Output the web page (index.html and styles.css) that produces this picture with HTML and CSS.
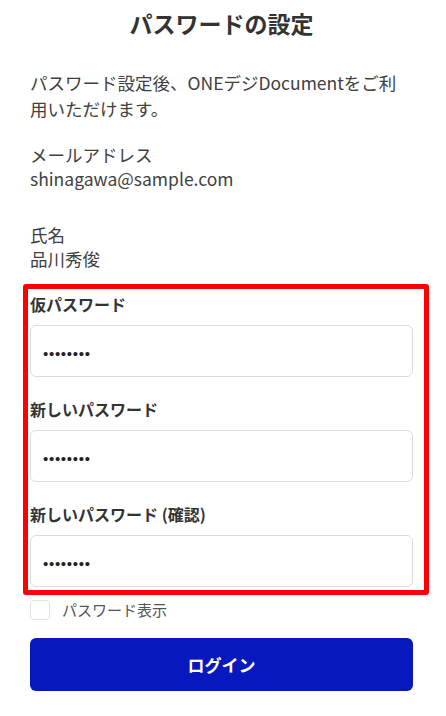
FILE: index.html
```html
<!DOCTYPE html>
<html lang="ja">
<head>
    <meta charset="UTF-8">
    <title>パスワードの設定</title>
    <link rel="stylesheet" href="styles.css">
</head>
<body>
    <div class="page">
        <h1 class="title">パスワードの設定</h1>

        <p class="lead">パスワード設定後、ONEデジDocumentをご利<br>用いただけます。</p>

        <dl class="info">
            <dt>メールアドレス</dt>
            <dd>shinagawa@sample.com</dd>
        </dl>
        <dl class="info">
            <dt>氏名</dt>
            <dd>品川秀俊</dd>
        </dl>

        <div class="mark">
            <div class="field">
                <label class="field-label" for="tmp">仮パスワード</label>
                <input class="field-input" id="tmp" type="password" value="12345678">
            </div>
            <div class="field">
                <label class="field-label" for="pw">新しいパスワード</label>
                <input class="field-input" id="pw" type="password" value="12345678">
            </div>
            <div class="field">
                <label class="field-label" for="pw2">新しいパスワード (確認)</label>
                <input class="field-input" id="pw2" type="password" value="12345678">
            </div>
        </div>

        <label class="show">
            <input class="show-box" type="checkbox">
            <span>パスワード表示</span>
        </label>

        <button class="login" type="button">ログイン</button>
    </div>
</body>
</html>
```

FILE: styles.css
```css
*{
    margin: 0;
    padding: 0;
    box-sizing: border-box;
}
body{
    background: #fff;
    color: #404040;
    font-family: "Noto Sans CJK JP", "Noto Sans", sans-serif;
    overflow: hidden;
}
.page{
    padding: 0 33px 0 30px;
}
.title{
    margin-top: 8px;
    font-size: 23px;
    line-height: 30px;
    font-weight: 700;
    color: #333;
    text-align: center;
}
.lead{
    margin-top: 32px;
    font-size: 17.5px;
    line-height: 26px;
}
.info{
    margin-top: 21px;
    font-size: 17.5px;
    line-height: 24px;
}
.info + .info{
    margin-top: 32px;
}
.info dd{
    margin: 0;
}
/* red frame around the password fields */
.mark{
    margin: 13px -16px 0 -7px;
    padding: 4px 11px 3px 2px;
    border: 5px solid #ff0000;
    border-radius: 3px;
}
.field{
    display: flex;
    flex-direction: column;
}
.field + .field{
    margin-top: 21px;
}
.field-label{
    font-size: 16px;
    line-height: 22px;
    font-weight: 700;
    color: #333;
}
.field-input{
    margin-top: 10px;
    height: 52px;
    padding: 4px 12px 0;
    border: 1px solid #dcdcdc;
    border-radius: 6px;
    font-family: "Liberation Sans", sans-serif;
    font-size: 15px;
    letter-spacing: 0.7px;
    color: #222;
    outline: none;
}
.show{
    display: flex;
    align-items: center;
    gap: 12px;
    margin-top: 5px;
    font-size: 15px;
    line-height: 20px;
    color: #555;
}
.show-box{
    appearance: none;
    width: 20px;
    height: 20px;
    border: 1px solid #e2e2e2;
    border-radius: 4px;
    background: #fff;
}
.login{
    display: block;
    width: 100%;
    height: 53px;
    margin-top: 18px;
    border: none;
    border-radius: 6px;
    background: #0718bf;
    color: #fff;
    font-family: "Noto Sans CJK JP", sans-serif;
    font-size: 17px;
    font-weight: 700;
}
```
